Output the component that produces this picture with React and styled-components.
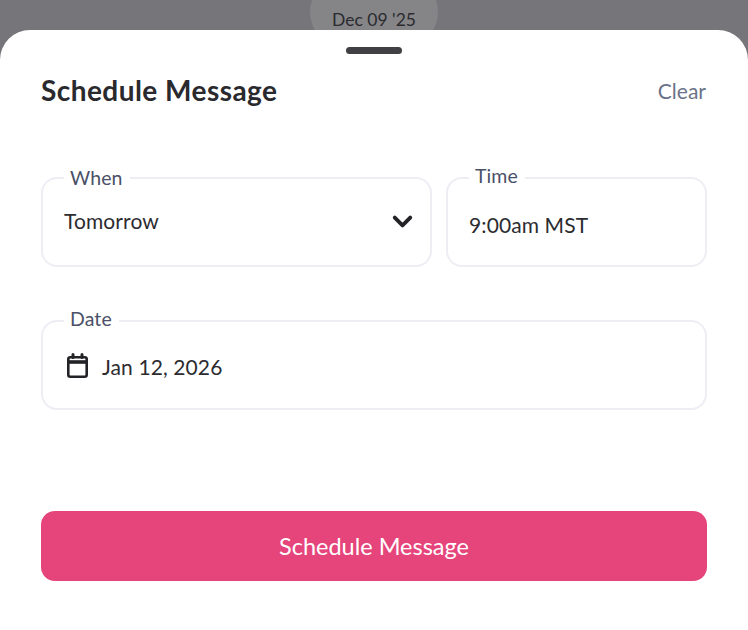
import React from 'react';
import styled, { createGlobalStyle } from 'styled-components';
import { ChevronDown } from 'lucide-react';

const GlobalStyle = createGlobalStyle`
    html, body {
        margin: 0;
        padding: 0;
        height: 100%;
        background: #75757a;
    }
    #root {
        height: 100%;
    }
`

const Page = styled.div`
    width: 748px;
    height: 630px;
    display: flex;
    flex-direction: column;
    overflow: hidden;
    background: #75757a;
    font-family: Lato, "Noto Sans", sans-serif;
    color: #26262a;
`

const Backdrop = styled.div`
    height: 30px;
    flex: none;
    display: flex;
    justify-content: center;
    overflow: hidden;
`

const DatePill = styled.div`
    width: 128px;
    height: 72px;
    margin-top: -24px;
    border-radius: 36px;
    background: #858588;
    color: #2b2b2f;
    font-size: 17.5px;
    line-height: 20px;
    padding-top: 34px;
    box-sizing: border-box;
    text-align: center;
`

const Sheet = styled.div`
    flex: 1;
    background: #fff;
    border-radius: 30px 30px 0 0;
    padding: 17px 41px 0;
    display: flex;
    flex-direction: column;
`

const Handle = styled.div`
    width: 56px;
    height: 7px;
    border-radius: 4px;
    background: #414145;
    align-self: center;
`

const TitleRow = styled.div`
    display: flex;
    justify-content: space-between;
    align-items: center;
    height: 30px;
    margin-top: 21px;
`

const Title = styled.h2`
    margin: 0;
    font-size: 28px;
    font-weight: 700;
    letter-spacing: 0.45px;
    color: #2a2a2e;
`

const ClearLink = styled.span`
    font-size: 21px;
    margin-right: 1px;
    color: #6b7389;
`

const FieldRow = styled.div`
    display: flex;
    gap: 14px;
    margin-top: ${(p) => p.$gap}px;
`

const Field = styled.div`
    position: relative;
    box-sizing: border-box;
    flex: ${(p) => p.$flex};
    height: 90px;
    border: 2px solid #ededf4;
    border-radius: 16px;
    padding: 0 21px;
    display: flex;
    align-items: center;
    gap: 12px;
    font-size: 21px;
    letter-spacing: 0.1px;
    color: #2c2c30;
`

const FieldLabel = styled.span`
    position: absolute;
    left: 21px;
    top: ${(p) => p.$top}px;
    padding: 0 7px 0 6px;
    background: #fff;
    font-size: 19.5px;
    line-height: 22px;
    color: #4a5068;
`

const FieldValue = styled.span`
    flex: 1;
    position: relative;
    top: ${(p) => p.$shift}px;
`

const CalendarIcon = styled.svg`
    width: 26px;
    height: 28px;
    flex: none;
`

const SubmitButton = styled.button`
    margin-top: 101px;
    height: 70px;
    border: 0;
    border-radius: 14px;
    background: #e6457b;
    color: #fff;
    font-family: inherit;
    font-size: 23.5px;
`

const Chevron = styled(ChevronDown)`
    margin-right: -9px;
    margin-top: -2px;
    flex: none;
`

const App = () => {
    return (
        <Page>
            <GlobalStyle />
            <Backdrop>
                <DatePill>Dec 09 '25</DatePill>
            </Backdrop>
            <Sheet>
                <Handle />
                <TitleRow>
                    <Title>Schedule Message</Title>
                    <ClearLink>Clear</ClearLink>
                </TitleRow>

                <FieldRow $gap={72}>
                    <Field $flex="0 0 391px">
                        <FieldLabel $top={-12}>When</FieldLabel>
                        <FieldValue $shift={-2}>Tomorrow</FieldValue>
                        <Chevron size={31} strokeWidth={3} color="#232327" />
                    </Field>
                    <Field $flex="1">
                        <FieldLabel $top={-14}>Time</FieldLabel>
                        <FieldValue $shift={2}>9:00am MST</FieldValue>
                    </Field>
                </FieldRow>

                <FieldRow $gap={53}>
                    <Field $flex="1">
                        <FieldLabel $top={-14}>Date</FieldLabel>
                        <CalendarIcon viewBox="0 0 26 28" fill="none" stroke="#232327" strokeWidth="2.6">
                            <rect x="4.3" y="6.3" width="18.4" height="19.4" rx="2" />
                            <path d="M4 11h19" strokeWidth="3.6" />
                            <path d="M9 3.5v3M18 3.5v3" strokeWidth="3" strokeLinecap="round" />
                        </CalendarIcon>
                        <FieldValue $shift={1}>Jan 12, 2026</FieldValue>
                    </Field>
                </FieldRow>

                <SubmitButton>Schedule Message</SubmitButton>
            </Sheet>
        </Page>
    )
}

export default App;
